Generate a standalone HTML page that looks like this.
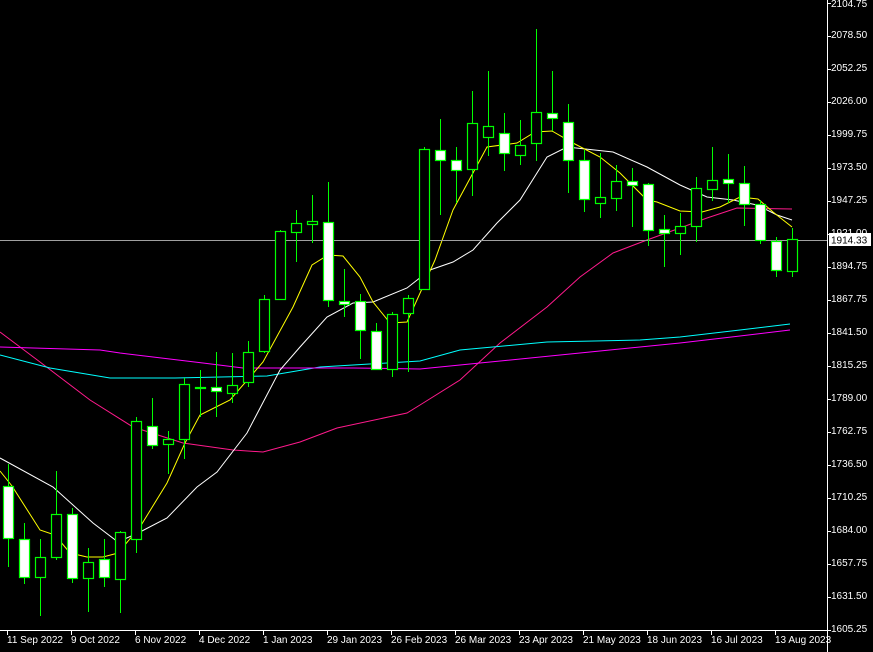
<!DOCTYPE html>
<html><head><style>
html,body{margin:0;padding:0;background:#000;overflow:hidden}
svg{display:block}
text{font-family:"Liberation Sans","DejaVu Sans",sans-serif;font-size:10px;fill:#fff}
.w{fill:#ffffff;stroke:#00ff00;stroke-width:1.2}
.b{fill:#000000;stroke:#00ff00;stroke-width:1.2}
</style></head><body>
<svg width="873" height="652" viewBox="0 0 873 652" xmlns="http://www.w3.org/2000/svg">
<rect width="873" height="652" fill="#000"/>
<g fill="none" stroke-width="1">
<polyline stroke="#ff1a8c" points="0,332 40,362 90,400 133,427 183,443 233,450 263,452 300,442 337,428 407,413 420,405 460,380 500,343 547,307 580,277 613,253 647,240 680,228 707,218 737,208 792,209"/>
<polyline stroke="#00ffff" points="0,355 50,368 110,378 175,378 267,376 320,367 353,365 420,361 460,350 547,342 640,340 680,337 740,330 790,324"/>
<polyline stroke="#ff00ff" points="0,347 100,350 120,353 203,363 243,368 353,368 420,369 480,363 580,353 680,343 740,336 790,330"/>
<polyline stroke="#ffffff" points="0,458 53,487 93,523 118,542 140,532 167,518 197,487 217,472 247,433 280,370 300,347 327,317 353,303 373,302 407,288 430,270 453,262 473,250 497,223 520,200 547,157 567,147 613,152 647,167 680,185 707,197 733,200 757,205 777,215 792,220"/>
<polyline stroke="#ffff00" points="0,471 12,486 40,530 55,535 70,553 87,557 103,557 118,553 140,527 167,483 185,443 200,415 230,400 263,362 293,307 312,265 328,255 343,256 360,277 373,302 390,323 407,322 435,260 453,210 487,147 517,143 535,132 552,131 573,143 600,157 620,173 647,200 657,202 680,211 702,212 720,207 740,197 758,199 773,212 792,227"/>
</g>
<line x1="0" y1="240.5" x2="827" y2="240.5" stroke="#a0a0a0"/>
<path stroke="#00ff00" stroke-width="1" fill="none" d="M8.5 464V567M24.5 523V584M40.5 539V616M56.5 471V560M72.5 508V583M88.5 548V612M104.5 539V587M120.5 531V613M136.5 417V553M152.5 398V449M168.5 431V474M184.5 378V459M200.5 370V417M216.5 352V417M232.5 353V403M248.5 341V387M264.5 295V353M280.5 230V299M296.5 210V262M312.5 195V243M328.5 182V307M344.5 269V317M360.5 294V359M376.5 323V370M392.5 312V377M408.5 295V372M424.5 147V290M440.5 119V215M456.5 147V203M472.5 91V196M488.5 71V156M504.5 113V171M520.5 120V165M536.5 29V161M552.5 71V131M568.5 104V193M584.5 150V212M600.5 153V218M616.5 165V211M632.5 168V227M648.5 183V246M664.5 215V267M680.5 213V255M696.5 177V242M712.5 147V201M728.5 154V203M744.5 166V226M760.5 200V244M776.5 237V277M792.5 228V277"/>
<g>
<rect class="w" x="3.5" y="486.5" width="10" height="52"/>
<rect class="w" x="19.5" y="539.5" width="10" height="38"/>
<rect class="b" x="35.5" y="557.5" width="10" height="20"/>
<rect class="b" x="51.5" y="514.5" width="10" height="43"/>
<rect class="w" x="67.5" y="514.5" width="10" height="64"/>
<rect class="b" x="83.5" y="562.5" width="10" height="16"/>
<rect class="w" x="99.5" y="559.5" width="10" height="18"/>
<rect class="b" x="115.5" y="532.5" width="10" height="47"/>
<rect class="b" x="131.5" y="421.5" width="10" height="118"/>
<rect class="w" x="147.5" y="426.5" width="10" height="19"/>
<rect class="b" x="163.5" y="439.5" width="10" height="5"/>
<rect class="b" x="179.5" y="384.5" width="10" height="55"/>
<rect class="b" x="195.5" y="387.5" width="10" height="1"/>
<rect class="w" x="211.5" y="387.5" width="10" height="4"/>
<rect class="b" x="227.5" y="385.5" width="10" height="8"/>
<rect class="b" x="243.5" y="352.5" width="10" height="30"/>
<rect class="b" x="259.5" y="299.5" width="10" height="52"/>
<rect class="b" x="275.5" y="231.5" width="10" height="68"/>
<rect class="b" x="291.5" y="223.5" width="10" height="9"/>
<rect class="b" x="307.5" y="221.5" width="10" height="3"/>
<rect class="w" x="323.5" y="222.5" width="10" height="78"/>
<rect class="w" x="339.5" y="301.5" width="10" height="3"/>
<rect class="w" x="355.5" y="301.5" width="10" height="29"/>
<rect class="w" x="371.5" y="331.5" width="10" height="38"/>
<rect class="b" x="387.5" y="314.5" width="10" height="55"/>
<rect class="b" x="403.5" y="298.5" width="10" height="15"/>
<rect class="b" x="419.5" y="149.5" width="10" height="140"/>
<rect class="w" x="435.5" y="150.5" width="10" height="10"/>
<rect class="w" x="451.5" y="160.5" width="10" height="10"/>
<rect class="b" x="467.5" y="123.5" width="10" height="46"/>
<rect class="b" x="483.5" y="126.5" width="10" height="11"/>
<rect class="w" x="499.5" y="133.5" width="10" height="20"/>
<rect class="b" x="515.5" y="145.5" width="10" height="10"/>
<rect class="b" x="531.5" y="112.5" width="10" height="31"/>
<rect class="w" x="547.5" y="113.5" width="10" height="5"/>
<rect class="w" x="563.5" y="122.5" width="10" height="38"/>
<rect class="w" x="579.5" y="160.5" width="10" height="39"/>
<rect class="b" x="595.5" y="197.5" width="10" height="6"/>
<rect class="b" x="611.5" y="181.5" width="10" height="17"/>
<rect class="w" x="627.5" y="181.5" width="10" height="4"/>
<rect class="w" x="643.5" y="184.5" width="10" height="46"/>
<rect class="w" x="659.5" y="229.5" width="10" height="4"/>
<rect class="b" x="675.5" y="226.5" width="10" height="7"/>
<rect class="b" x="691.5" y="188.5" width="10" height="38"/>
<rect class="b" x="707.5" y="180.5" width="10" height="9"/>
<rect class="w" x="723.5" y="179.5" width="10" height="4"/>
<rect class="w" x="739.5" y="183.5" width="10" height="21"/>
<rect class="w" x="755.5" y="204.5" width="10" height="36"/>
<rect class="w" x="771.5" y="241.5" width="10" height="29"/>
<rect class="b" x="787.5" y="239.5" width="10" height="32"/>
</g>
<line x1="827.5" y1="0" x2="827.5" y2="652" stroke="#fff"/>
<line x1="0" y1="630.5" x2="827" y2="630.5" stroke="#fff"/>
<path stroke="#fff" stroke-width="1" d="M827 3.5h4M827 36.5h4M827 69.5h4M827 102.5h4M827 135.5h4M827 168.5h4M827 201.5h4M827 234.5h4M827 267.5h4M827 300.5h4M827 333.5h4M827 366.5h4M827 399.5h4M827 432.5h4M827 465.5h4M827 498.5h4M827 531.5h4M827 564.5h4M827 597.5h4M827 630.5h4M7.5 630v5M71.5 630v5M135.5 630v5M199.5 630v5M263.5 630v5M327.5 630v5M391.5 630v5M455.5 630v5M519.5 630v5M583.5 630v5M647.5 630v5M711.5 630v5M775.5 630v5"/>
<rect x="829" y="233" width="42" height="13" fill="#fff"/>
<text x="831" y="243.5" style="fill:#000">1914.33</text>
<g>
<text x="831" y="7">2104.75</text>
<text x="831" y="38">2078.50</text>
<text x="831" y="71">2052.25</text>
<text x="831" y="104">2026.00</text>
<text x="831" y="137">1999.75</text>
<text x="831" y="170">1973.50</text>
<text x="831" y="203">1947.25</text>
<text x="831" y="236">1921.00</text>
<text x="831" y="269">1894.75</text>
<text x="831" y="302">1867.75</text>
<text x="831" y="335">1841.50</text>
<text x="831" y="368">1815.25</text>
<text x="831" y="401">1789.00</text>
<text x="831" y="434">1762.75</text>
<text x="831" y="467">1736.50</text>
<text x="831" y="500">1710.25</text>
<text x="831" y="533">1684.00</text>
<text x="831" y="566">1657.75</text>
<text x="831" y="599">1631.50</text>
<text x="831" y="632">1605.25</text>
</g>
<g>
<text x="7" y="643">11 Sep 2022</text>
<text x="71" y="643">9 Oct 2022</text>
<text x="135" y="643">6 Nov 2022</text>
<text x="199" y="643">4 Dec 2022</text>
<text x="263" y="643">1 Jan 2023</text>
<text x="327" y="643">29 Jan 2023</text>
<text x="391" y="643">26 Feb 2023</text>
<text x="455" y="643">26 Mar 2023</text>
<text x="519" y="643">23 Apr 2023</text>
<text x="583" y="643">21 May 2023</text>
<text x="647" y="643">18 Jun 2023</text>
<text x="711" y="643">16 Jul 2023</text>
<text x="775" y="643">13 Aug 2023</text>
</g>
</svg>
</body></html>
